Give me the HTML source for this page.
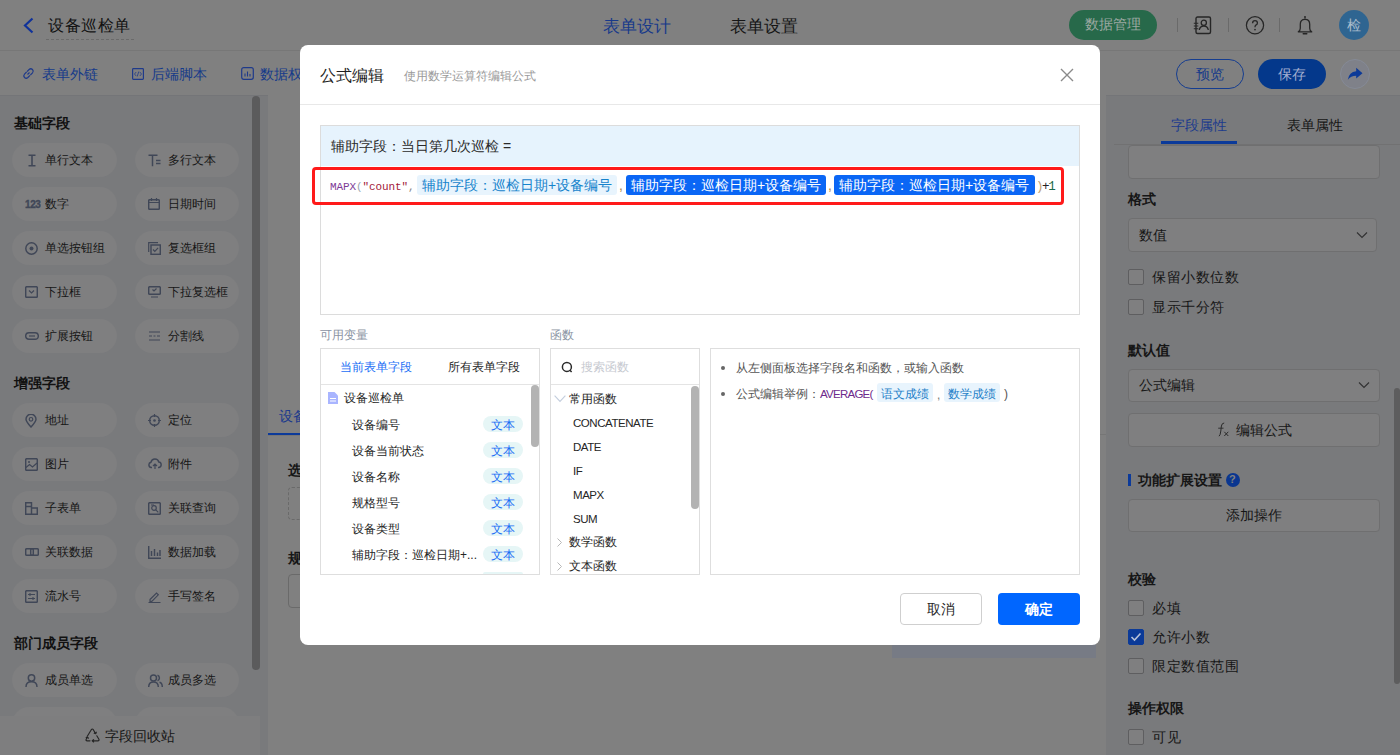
<!DOCTYPE html>
<html><head><meta charset="utf-8">
<style>
*{box-sizing:border-box;margin:0;padding:0}
html,body{width:1400px;height:755px;overflow:hidden}
body{position:relative;font-family:"Liberation Sans",sans-serif;background:#808080;color:#1a1a1a}
.a{position:absolute}
.t{position:absolute;white-space:nowrap;line-height:1}
/* background app (already dimmed colours) */
#hdrline{left:0;top:50px;width:1400px;height:1px;background:#777}
#left{left:0;top:95px;width:268px;height:660px;background:#797a7c;border-top:1px solid #747578}
#strip{display:none}
#right{left:1106px;top:95px;width:294px;height:660px;background:#797a7c;border-top:1px solid #747578}
.pill{position:absolute;width:105px;height:34px;border-radius:17px;background:#7f7f80}
.pill span{position:absolute;left:33px;top:11px;font-size:12px;line-height:13px;color:#161616;white-space:nowrap}
.pill svg{position:absolute;left:13px;top:11px}
.sec{position:absolute;left:14px;font-size:14px;font-weight:bold;line-height:14px;color:#111}
.rin{position:absolute;left:1128px;width:252px;height:33px;border:1px solid #6f6f70;border-radius:4px;background:#7f7f80}
.rlab{position:absolute;left:1128px;font-size:14px;font-weight:bold;line-height:14px;color:#161616}
.cb{position:absolute;left:1128px;width:16px;height:16px;border:1px solid #5e5e60;border-radius:2px;background:#7f7f80}
.cbt{position:absolute;left:1152px;font-size:14px;line-height:14px;letter-spacing:0.6px;color:#161616;white-space:nowrap}
/* modal */
#modal{left:300px;top:45px;width:800px;height:600px;background:#fff;border-radius:8px}
.mt{position:absolute;white-space:nowrap;line-height:1}
</style></head><body>

<!-- ===== header ===== -->
<svg class="a" style="left:22px;top:17px" width="14" height="17" viewBox="0 0 14 17"><path d="M10.5 1.5 L3 8.5 L10.5 15.5" fill="none" stroke="#10329a" stroke-width="2.2"/></svg>
<div class="t" style="left:48px;top:18px;font-size:16px;letter-spacing:0.5px;color:#121212">设备巡检单</div>
<div class="a" style="left:46px;top:39px;width:88px;border-top:1px dashed #6a6a6a"></div>
<div class="t" style="left:603px;top:18px;font-size:16.5px;color:#183a8a">表单设计</div>
<div class="t" style="left:730px;top:18px;font-size:16.5px;color:#161616">表单设置</div>
<div class="a" style="left:1069px;top:10px;width:88px;height:30px;border-radius:15px;background:#27694a"></div>
<div class="t" style="left:1085px;top:17px;font-size:14px;color:#9ca8a2">数据管理</div>
<div class="a" style="left:1177px;top:18px;width:1px;height:14px;background:#6a6a6a"></div>
<div class="a" style="left:1228px;top:18px;width:1px;height:14px;background:#6a6a6a"></div>
<div class="a" style="left:1279px;top:18px;width:1px;height:14px;background:#6a6a6a"></div>
<svg class="a" style="left:1192px;top:16px" width="20" height="19" viewBox="0 0 20 19"><rect x="4" y="1" width="14.5" height="16.5" rx="1.5" fill="none" stroke="#262626" stroke-width="1.4"/><circle cx="11.8" cy="6.7" r="2.6" fill="none" stroke="#262626" stroke-width="1.3"/><path d="M7.3 14 Q8 10 11.8 10 Q15.6 10 16.3 14" fill="none" stroke="#262626" stroke-width="1.3"/><path d="M1.8 7.3h4.5M1.8 10h4.5M1.8 12.7h4.5" stroke="#262626" stroke-width="1.1"/></svg>
<svg class="a" style="left:1245px;top:15px" width="20" height="20" viewBox="0 0 20 20"><circle cx="10" cy="10.3" r="8.6" fill="none" stroke="#262626" stroke-width="1.25"/><path d="M7.6 8.2 Q7.6 5.6 10 5.6 Q12.4 5.6 12.4 7.9 Q12.4 9.4 10.8 10.2 Q10 10.6 10 12.3" fill="none" stroke="#262626" stroke-width="1.3"/><circle cx="10" cy="14.6" r="0.85" fill="#262626"/></svg>
<svg class="a" style="left:1296px;top:16px" width="18" height="19" viewBox="0 0 18 19"><path d="M2.3 15.8 Q4.3 14.6 4.3 12.2 V8.2 Q4.3 3.3 9 3.3 Q13.7 3.3 13.7 8.2 V12.2 Q13.7 14.6 15.7 15.8 Z" fill="none" stroke="#262626" stroke-width="1.3" stroke-linejoin="round"/><path d="M9 0.6 V2" stroke="#262626" stroke-width="1.5" stroke-linecap="round"/><path d="M7.2 17.8 H10.8" stroke="#262626" stroke-width="1.4" stroke-linecap="round"/></svg>
<div class="a" style="left:1339px;top:10px;width:30px;height:30px;border-radius:15px;background:#2f6591"></div>
<div class="t" style="left:1347px;top:18px;font-size:14px;color:#a9bccc">检</div>
<div class="a" id="hdrline"></div>

<!-- toolbar -->
<svg class="a" style="left:22px;top:67px" width="13" height="13" viewBox="0 0 13 13"><path d="M5.5 7.5 L7.5 5.5 M4.6 5 L2.5 7.1 Q1 8.8 2.5 10.5 Q4.2 12 5.9 10.5 L8 8.4 M5 4.6 L7.1 2.5 Q8.8 1 10.5 2.5 Q12 4.2 10.5 5.9 L8.4 8" fill="none" stroke="#1f3a8a" stroke-width="1.2"/></svg>
<div class="t" style="left:42px;top:67px;font-size:14px;color:#153a8a">表单外链</div>
<svg class="a" style="left:132px;top:68px" width="12" height="12" viewBox="0 0 12 12"><rect x="0.6" y="0.6" width="10.8" height="10.8" rx="0.8" fill="none" stroke="#1f3a8a" stroke-width="1.2"/><path d="M4.2 4 L2.5 6 L4.2 8 M7.8 4 L9.5 6 L7.8 8 M6.8 3.5 L5.2 8.5" fill="none" stroke="#1f3a8a" stroke-width="0.8"/></svg>
<div class="t" style="left:151px;top:67px;font-size:14px;color:#153a8a">后端脚本</div>
<svg class="a" style="left:241px;top:67px" width="13" height="13" viewBox="0 0 13 13"><rect x="0.7" y="0.7" width="11.6" height="11.6" rx="2" fill="none" stroke="#1f3a8a" stroke-width="1.2"/><path d="M4 9.5V6.5M6.5 9.5V4.5M9 9.5V7" stroke="#1f3a8a" stroke-width="1.1"/></svg>
<div class="t" style="left:260px;top:67px;font-size:14px;color:#153a8a">数据权限</div>

<div class="a" style="left:1176px;top:59px;width:68px;height:30px;border-radius:15px;border:1px solid #153d90"></div>
<div class="t" style="left:1196px;top:67px;font-size:14px;color:#163a8a">预览</div>
<div class="a" style="left:1258px;top:59px;width:68px;height:30px;border-radius:15px;background:#04388b"></div>
<div class="t" style="left:1278px;top:67px;font-size:14px;color:#a3aed0">保存</div>
<div class="a" style="left:1340px;top:59px;width:30px;height:30px;border-radius:15px;border:1px solid #858a96;background:#7f8189"></div>
<svg class="a" style="left:1346px;top:66px" width="18" height="15" viewBox="0 0 18 15"><path d="M16.5 7.2 L10.2 1.8 V5.2 Q3 5.8 1.8 13.8 Q4.8 9.8 10.2 9.8 V12.6 Z" fill="#0c3a98"/></svg>

<!-- left panel -->
<div class="a" id="left"></div>
<div class="a" id="strip"></div>
<div class="a" style="left:252px;top:96px;width:8px;height:574px;border-radius:4px;background:#5b5b5c"></div>

<div class="sec" style="top:116px">基础字段</div>
<div class="pill" style="left:12px;top:143px"><svg style="left:15px" width="10" height="13" viewBox="0 0 10 13"><path d="M1.5 1.2h7M1.5 11.8h7M5 1.2v10.6" stroke="#404757" stroke-width="1.6"/></svg><span>单行文本</span></div>
<div class="pill" style="left:135px;width:104px;top:143px"><svg width="14" height="13" viewBox="0 0 14 13"><path d="M0.5 1.2h9M4.5 1.2v11M8 6.5h4.5M8 9.5h4.5" stroke="#404757" stroke-width="1.5"/></svg><span>多行文本</span></div>
<div class="pill" style="left:12px;top:187px"><svg width="16" height="12" viewBox="0 0 16 12"><text x="0" y="9.5" font-size="10" font-weight="bold" fill="#404757" stroke="#404757" stroke-width="0.35" font-family="Liberation Sans" letter-spacing="-0.4">123</text></svg><span>数字</span></div>
<div class="pill" style="left:135px;width:104px;top:187px"><svg width="12" height="12" viewBox="0 0 12 12"><rect x="0.7" y="1.7" width="10.6" height="9.6" rx="1" fill="none" stroke="#404757" stroke-width="1.45"/><path d="M0.7 4.5h10.6M3.5 0v3M8.5 0v3" stroke="#404757" stroke-width="1.2"/></svg><span>日期时间</span></div>
<div class="pill" style="left:12px;top:231px"><svg width="13" height="13" viewBox="0 0 13 13"><circle cx="6.5" cy="6.5" r="5.7" fill="none" stroke="#404757" stroke-width="1.45"/><circle cx="6.5" cy="6.5" r="2" fill="#404757"/></svg><span>单选按钮组</span></div>
<div class="pill" style="left:135px;width:104px;top:231px"><svg width="13" height="13" viewBox="0 0 13 13"><rect x="3" y="3" width="9.3" height="9.3" fill="none" stroke="#404757" stroke-width="1.45"/><path d="M0.7 10V0.7H10" fill="none" stroke="#404757" stroke-width="1.2"/><path d="M5 7.5l1.8 1.8 3.3-3.5" fill="none" stroke="#404757" stroke-width="1.2"/></svg><span>复选框组</span></div>
<div class="pill" style="left:12px;top:275px"><svg width="13" height="12" viewBox="0 0 13 12"><rect x="0.7" y="0.7" width="11.6" height="10.6" rx="1" fill="none" stroke="#404757" stroke-width="1.45"/><path d="M4 4.5l2.5 2.5 2.5-2.5" fill="none" stroke="#404757" stroke-width="1.2"/></svg><span>下拉框</span></div>
<div class="pill" style="left:135px;width:104px;top:275px"><svg width="13" height="12" viewBox="0 0 13 12"><rect x="0.7" y="0.7" width="11.6" height="7.6" rx="1" fill="none" stroke="#404757" stroke-width="1.45"/><path d="M3 11h7M4.5 3.5l1.5 1.5 2.5-2.5" fill="none" stroke="#404757" stroke-width="1.2"/></svg><span>下拉复选框</span></div>
<div class="pill" style="left:12px;top:319px"><svg width="14" height="12" viewBox="0 0 14 12"><rect x="0.7" y="2.7" width="12.6" height="6.6" rx="3.3" fill="none" stroke="#404757" stroke-width="1.45"/><path d="M4 6h6" stroke="#404757" stroke-width="1.2"/></svg><span>扩展按钮</span></div>
<div class="pill" style="left:135px;width:104px;top:319px"><svg width="13" height="12" viewBox="0 0 13 12"><path d="M1 2h11M1 10h11M1 6h3M5.5 6h2M9 6h3" stroke="#404757" stroke-width="1.2"/></svg><span>分割线</span></div>

<div class="sec" style="top:376px">增强字段</div>
<div class="pill" style="left:12px;top:403px"><svg width="12" height="14" viewBox="0 0 12 14"><path d="M6 13 Q1 7.5 1 5.2 A5 5 0 0 1 11 5.2 Q11 7.5 6 13Z" fill="none" stroke="#404757" stroke-width="1.45"/><circle cx="6" cy="5.3" r="1.8" fill="none" stroke="#404757" stroke-width="1.2"/></svg><span>地址</span></div>
<div class="pill" style="left:135px;width:104px;top:403px"><svg width="13" height="13" viewBox="0 0 13 13"><circle cx="6.5" cy="6.5" r="4.8" fill="none" stroke="#404757" stroke-width="1.45"/><circle cx="6.5" cy="6.5" r="1.3" fill="#404757"/><path d="M6.5 0v3M6.5 10v3M0 6.5h3M10 6.5h3" stroke="#404757" stroke-width="1.2"/></svg><span>定位</span></div>
<div class="pill" style="left:12px;top:447px"><svg width="13" height="13" viewBox="0 0 13 13"><rect x="0.7" y="0.7" width="11.6" height="11.6" rx="1" fill="none" stroke="#404757" stroke-width="1.45"/><path d="M1 9.5l3.5-3 3 2.5 4.5-4" fill="none" stroke="#404757" stroke-width="1.2"/><circle cx="4" cy="4" r="1" fill="#404757"/></svg><span>图片</span></div>
<div class="pill" style="left:135px;width:104px;top:447px"><svg width="14" height="12" viewBox="0 0 14 12"><path d="M4 9.5H3.2A2.7 2.7 0 0 1 3 4.2 4 4 0 0 1 10.8 4 2.8 2.8 0 0 1 11 9.5H10" fill="none" stroke="#404757" stroke-width="1.45"/><path d="M7 11V6M5 8l2-2 2 2" fill="none" stroke="#404757" stroke-width="1.2"/></svg><span>附件</span></div>
<div class="pill" style="left:12px;top:491px"><svg width="13" height="13" viewBox="0 0 13 13"><path d="M0.7 12.3V0.7H6.5V12.3ZM6.5 6H12.3V12.3H6.5M0.7 4.5H6.5" fill="none" stroke="#404757" stroke-width="1.45"/></svg><span>子表单</span></div>
<div class="pill" style="left:135px;width:104px;top:491px"><svg width="13" height="13" viewBox="0 0 13 13"><rect x="0.7" y="0.7" width="11.6" height="11.6" rx="1" fill="none" stroke="#404757" stroke-width="1.45"/><circle cx="6" cy="6" r="2.3" fill="none" stroke="#404757" stroke-width="1.2"/><path d="M7.8 7.8l2.5 2.5M3 3h3" stroke="#404757" stroke-width="1.2"/></svg><span>关联查询</span></div>
<div class="pill" style="left:12px;top:535px"><svg width="14" height="12" viewBox="0 0 14 12"><rect x="0.7" y="2.7" width="7.6" height="6.6" rx="1" fill="none" stroke="#404757" stroke-width="1.45"/><rect x="5.7" y="2.7" width="7.6" height="6.6" rx="1" fill="none" stroke="#404757" stroke-width="1.45"/></svg><span>关联数据</span></div>
<div class="pill" style="left:135px;width:104px;top:535px"><svg width="13" height="13" viewBox="0 0 13 13"><path d="M0.7 0v12.3H13M3.5 10V5M6.5 10V3M9.5 10V6.5M12 10V4" fill="none" stroke="#404757" stroke-width="1.45"/></svg><span>数据加载</span></div>
<div class="pill" style="left:12px;top:579px"><svg width="13" height="13" viewBox="0 0 13 13"><rect x="0.7" y="0.7" width="11.6" height="11.6" rx="1" fill="none" stroke="#404757" stroke-width="1.45"/><path d="M3 4.5h7M3 8.5h7M5 3v3M8 7v3" stroke="#404757" stroke-width="1.1"/></svg><span>流水号</span></div>
<div class="pill" style="left:135px;width:104px;top:579px"><svg width="13" height="13" viewBox="0 0 13 13"><path d="M2 9.5l6.5-6.5 1.8 1.8-6.5 6.5H2Z M0.5 12.5h12" fill="none" stroke="#404757" stroke-width="1.2"/></svg><span>手写签名</span></div>

<div class="sec" style="top:636px">部门成员字段</div>
<div class="pill" style="left:12px;top:663px"><svg width="13" height="13" viewBox="0 0 13 13"><circle cx="6.5" cy="4" r="3.2" fill="none" stroke="#404757" stroke-width="1.45"/><path d="M1 13Q1 7.8 6.5 7.8 12 7.8 12 13" fill="none" stroke="#404757" stroke-width="1.45"/></svg><span>成员单选</span></div>
<div class="pill" style="left:135px;width:104px;top:663px"><svg width="15" height="13" viewBox="0 0 15 13"><circle cx="5.5" cy="4" r="3" fill="none" stroke="#404757" stroke-width="1.45"/><path d="M0.7 13Q0.7 8 5.5 8 10.3 8 10.3 13M9.5 1.2A3 3 0 0 1 9.5 6.8M11.5 8.3Q14.3 9 14.3 13" fill="none" stroke="#404757" stroke-width="1.45"/></svg><span>成员多选</span></div>
<div class="pill" style="left:12px;top:707px"></div>
<div class="pill" style="left:135px;width:104px;top:707px"></div>
<div class="a" style="left:0;top:716px;width:260px;height:39px;background:#7e7e7f"></div>
<svg class="a" style="left:85px;top:728px" width="15" height="15" viewBox="0 0 15 15"><path d="M2.3 8.2 L6.3 1.7 Q7.3 0.3 8.3 1.7 L10.6 5.6 M9.2 5.3 L10.7 5.7 L11.3 4.2" fill="none" stroke="#262626" stroke-width="1.15" stroke-linejoin="round" stroke-linecap="round"/><path d="M11.8 7.8 L13.9 11.3 Q14.5 12.8 12.8 12.8 H7.3 M8.6 11.6 L7.2 12.8 L8.6 14" fill="none" stroke="#262626" stroke-width="1.15" stroke-linejoin="round" stroke-linecap="round"/><path d="M5 12.8 H2.2 Q0.5 12.8 1.2 11.3 L2.4 9.2 M1.2 9.6 L2.5 9 L3.4 10.2" fill="none" stroke="#262626" stroke-width="1.15" stroke-linejoin="round" stroke-linecap="round"/></svg>
<div class="t" style="left:105px;top:729px;font-size:14px;color:#161616">字段回收站</div>

<!-- canvas bits -->
<div class="t" style="left:279px;top:409px;font-size:14px;color:#1c3a8c">设备</div>
<div class="a" style="left:268px;top:433px;width:40px;height:3px;background:#0c3a9a"></div>
<div class="a" style="left:268px;top:435px;width:40px;height:1px;background:#767676"></div>
<div class="t" style="left:288px;top:463px;font-size:14px;font-weight:bold;color:#161616">选择</div>
<div class="a" style="left:288px;top:487px;width:40px;height:33px;border:1px dashed #6a6a6a;border-radius:4px"></div>
<div class="t" style="left:288px;top:551px;font-size:14px;font-weight:bold;color:#161616">规格</div>
<div class="a" style="left:288px;top:574px;width:40px;height:34px;border:1px solid #6a6a6a;border-radius:4px"></div>
<div class="a" style="left:1095px;top:434px;width:11px;height:1px;background:#767676"></div>
<div class="a" style="left:892px;top:640px;width:204px;height:18px;background:#777b85"></div>

<!-- right panel -->
<div class="a" id="right"></div>
<div class="a" style="left:1394px;top:388px;width:6px;height:296px;border-radius:3px;background:#5d5d5e"></div>
<div class="t" style="left:1171px;top:118px;font-size:14px;color:#1c3a8c">字段属性</div>
<div class="t" style="left:1287px;top:118px;font-size:14px;color:#161616">表单属性</div>
<div class="a" style="left:1114px;top:144px;width:286px;height:1px;background:#717172"></div>
<div class="a" style="left:1161px;top:141px;width:76px;height:3px;background:#0b3a9a"></div>
<div class="rin" style="top:145px;height:34px"></div>
<div class="rlab" style="top:192px">格式</div>
<div class="rin" style="top:218px;height:34px;width:249px"></div>
<div class="t" style="left:1139px;top:228px;font-size:14px;color:#161616">数值</div>
<svg class="a" style="left:1356px;top:231px" width="12" height="8" viewBox="0 0 12 8"><path d="M1 1.5l5 5 5-5" fill="none" stroke="#333" stroke-width="1.2"/></svg>
<div class="cb" style="top:269px"></div><div class="cbt" style="top:270px">保留小数位数</div>
<div class="cb" style="top:299px"></div><div class="cbt" style="top:300px">显示千分符</div>
<div class="rlab" style="top:343px">默认值</div>
<div class="rin" style="top:369px"></div>
<div class="t" style="left:1139px;top:378px;font-size:14px;color:#161616">公式编辑</div>
<svg class="a" style="left:1358px;top:381px" width="12" height="8" viewBox="0 0 12 8"><path d="M1 1.5l5 5 5-5" fill="none" stroke="#333" stroke-width="1.2"/></svg>
<div class="rin" style="top:413px;height:34px"></div>
<svg class="a" style="left:1217px;top:422px" width="13" height="16" viewBox="0 0 13 16"><path d="M2 14.2 Q3.3 13.5 3.8 9 L4.4 4 Q4.9 1 7.2 1" fill="none" stroke="#2a2a2a" stroke-width="1"/><path d="M1.2 6.2H6.5" stroke="#2a2a2a" stroke-width="0.9"/><path d="M7.3 9.8L11.3 14M11.3 9.8L7.3 14" stroke="#2a2a2a" stroke-width="1"/></svg>
<div class="t" style="left:1236px;top:423px;font-size:14px;color:#161616">编辑公式</div>
<div class="a" style="left:1128px;top:474px;width:3px;height:12px;background:#0b3a9a"></div>
<div class="t" style="left:1138px;top:473px;font-size:14px;font-weight:bold;color:#161616">功能扩展设置</div>
<div class="a" style="left:1226px;top:473px;width:14px;height:14px;border-radius:7px;background:#0a3690"></div>
<div class="t" style="left:1229px;top:474px;font-size:11px;font-weight:bold;color:#808080">?</div>
<div class="rin" style="top:499px"></div>
<div class="t" style="left:1226px;top:508px;font-size:14px;color:#161616">添加操作</div>
<div class="rlab" style="top:572px">校验</div>
<div class="cb" style="top:600px"></div><div class="cbt" style="top:601px">必填</div>
<div class="cb" style="top:629px;background:#0b3a98;border-color:#0b3a98"></div>
<svg class="a" style="left:1130px;top:632px" width="12" height="10" viewBox="0 0 12 10"><path d="M1.5 5l3 3 6-6.5" fill="none" stroke="#b8c2d8" stroke-width="1.6"/></svg>
<div class="cbt" style="top:630px">允许小数</div>
<div class="cb" style="top:658px"></div><div class="cbt" style="top:659px">限定数值范围</div>
<div class="rlab" style="top:701px">操作权限</div>
<div class="cb" style="top:729px"></div><div class="cbt" style="top:730px">可见</div>

<!-- ===== modal ===== -->
<div class="a" id="modal"></div>
<div class="t" style="left:320px;top:68px;font-size:16px;color:#1f1f1f">公式编辑</div>
<div class="t" style="left:404px;top:70px;font-size:12px;color:#9a9a9a">使用数学运算符编辑公式</div>
<svg class="a" style="left:1060px;top:68px" width="14" height="14" viewBox="0 0 14 14"><path d="M1 1L13 13M13 1L1 13" stroke="#8a8a8a" stroke-width="1.4"/></svg>
<div class="a" style="left:300px;top:104px;width:800px;height:1px;background:#e8e8e8"></div>
<div class="a" style="left:320px;top:125px;width:760px;height:190px;border:1px solid #dcdcdc"></div>
<div class="a" style="left:321px;top:126px;width:758px;height:40px;background:#e6f3fd"></div>
<div class="t" style="left:331px;top:139px;font-size:14px;color:#2a2a2a">辅助字段：当日第几次巡检 =</div>
<div class="a" style="left:312px;top:167px;width:752px;height:38px;border:3px solid #ff1a1a;border-radius:4px"></div>
<div class="t" style="left:330px;top:182px;font-size:11px;font-family:'Liberation Mono',monospace;letter-spacing:-0.1px;color:#7e3a96">MAPX<span style="color:#9aa7b0">(</span><span style="color:#a31a3a">"count"</span><span style="color:#888">,</span></div>
<div class="a" style="left:417px;top:175px;width:200px;height:20px;border-radius:3px;background:#e8f4fd"></div>
<div class="t" style="left:422px;top:178px;font-size:14px;color:#1683cc">辅助字段：巡检日期+设备编号</div>
<div class="t" style="left:619px;top:178px;font-size:14px;color:#a8844c">,</div>
<div class="a" style="left:626px;top:175px;width:200px;height:20px;border-radius:3px;background:#0a66f5"></div>
<div class="t" style="left:631px;top:178px;font-size:14px;color:#fff">辅助字段：巡检日期+设备编号</div>
<div class="t" style="left:828px;top:178px;font-size:14px;color:#a8844c">,</div>
<div class="a" style="left:834px;top:175px;width:201px;height:20px;border-radius:3px;background:#0a66f5"></div>
<div class="t" style="left:839px;top:178px;font-size:14px;color:#fff">辅助字段：巡检日期+设备编号</div>
<div class="t" style="left:1036px;top:181px;font-size:12.5px;font-family:'Liberation Mono',monospace;letter-spacing:-1.4px;color:#c0a070">)<span style="color:#222">+</span><span style="color:#1a6a4a">1</span></div>

<div class="t" style="left:320px;top:329px;font-size:12px;color:#8a93a3">可用变量</div>
<div class="t" style="left:550px;top:329px;font-size:12px;color:#8a93a3">函数</div>

<div class="a" style="left:320px;top:348px;width:220px;height:227px;border:1px solid #dedede"></div>
<div class="a" style="left:321px;top:384px;width:218px;height:1px;background:#e4e4e4"></div>
<div class="t" style="left:340px;top:361px;font-size:12px;color:#1a6ef5">当前表单字段</div>
<div class="t" style="left:448px;top:361px;font-size:12px;color:#262626">所有表单字段</div>
<svg class="a" style="left:328px;top:392px" width="10" height="12" viewBox="0 0 10 12"><path d="M0 0H6.5L10 3.5V12H0Z" fill="#a9b5ff"/><path d="M2 6.5H8M2 9H8" stroke="#fff" stroke-width="1"/></svg>
<div class="t" style="left:344px;top:392px;font-size:12px;color:#262626">设备巡检单</div>
<div class="a" style="left:531px;top:385px;width:8px;height:62px;border-radius:4px;background:#b3b3b3"></div>
<div class="t" style="left:352px;top:419px;font-size:12px;color:#262626">设备编号</div>
<div class="a" style="left:483px;top:416px;width:40px;height:16px;border-radius:8px;background:#e6f6f6"></div>
<div class="t" style="left:491px;top:419px;font-size:12px;color:#1a6ef5">文本</div>
<div class="t" style="left:352px;top:445px;font-size:12px;color:#262626">设备当前状态</div>
<div class="a" style="left:483px;top:442px;width:40px;height:16px;border-radius:8px;background:#e6f6f6"></div>
<div class="t" style="left:491px;top:445px;font-size:12px;color:#1a6ef5">文本</div>
<div class="t" style="left:352px;top:471px;font-size:12px;color:#262626">设备名称</div>
<div class="a" style="left:483px;top:468px;width:40px;height:16px;border-radius:8px;background:#e6f6f6"></div>
<div class="t" style="left:491px;top:471px;font-size:12px;color:#1a6ef5">文本</div>
<div class="t" style="left:352px;top:497px;font-size:12px;color:#262626">规格型号</div>
<div class="a" style="left:483px;top:494px;width:40px;height:16px;border-radius:8px;background:#e6f6f6"></div>
<div class="t" style="left:491px;top:497px;font-size:12px;color:#1a6ef5">文本</div>
<div class="t" style="left:352px;top:523px;font-size:12px;color:#262626">设备类型</div>
<div class="a" style="left:483px;top:520px;width:40px;height:16px;border-radius:8px;background:#e6f6f6"></div>
<div class="t" style="left:491px;top:523px;font-size:12px;color:#1a6ef5">文本</div>
<div class="t" style="left:352px;top:549px;font-size:12px;color:#262626">辅助字段：巡检日期+...</div>
<div class="a" style="left:483px;top:546px;width:40px;height:16px;border-radius:8px;background:#e6f6f6"></div>
<div class="t" style="left:491px;top:549px;font-size:12px;color:#1a6ef5">文本</div>
<div class="a" style="left:483px;top:572px;width:40px;height:2px;border-radius:8px 8px 0 0;background:#e6f6f6"></div>

<div class="a" style="left:550px;top:348px;width:150px;height:227px;border:1px solid #dedede"></div>
<div class="a" style="left:551px;top:384px;width:148px;height:1px;background:#e4e4e4"></div>
<svg class="a" style="left:561px;top:361px" width="12" height="13" viewBox="0 0 12 13"><circle cx="5.9" cy="5.9" r="4.5" fill="none" stroke="#2a2a2a" stroke-width="1.5"/><path d="M9 9.2L10.6 10.9" stroke="#2a2a2a" stroke-width="1.5"/></svg>
<div class="t" style="left:581px;top:361px;font-size:12px;color:#c6c9d0">搜索函数</div>
<svg class="a" style="left:554px;top:395px" width="12" height="8" viewBox="0 0 12 8"><path d="M0.6 0.6L6 6.4 11.4 0.6" fill="none" stroke="#c3cddd" stroke-width="1.1"/></svg>
<div class="t" style="left:569px;top:393px;font-size:12px;color:#262626">常用函数</div>
<div class="t" style="left:573px;top:418px;font-size:11.5px;letter-spacing:-0.45px;color:#262626">CONCATENATE</div>
<div class="t" style="left:573px;top:442px;font-size:11.5px;letter-spacing:-0.45px;color:#262626">DATE</div>
<div class="t" style="left:573px;top:466px;font-size:11.5px;letter-spacing:-0.45px;color:#262626">IF</div>
<div class="t" style="left:573px;top:490px;font-size:11.5px;letter-spacing:-0.45px;color:#262626">MAPX</div>
<div class="t" style="left:573px;top:514px;font-size:11.5px;letter-spacing:-0.45px;color:#262626">SUM</div>
<svg class="a" style="left:557px;top:538px" width="5" height="9" viewBox="0 0 5 9"><path d="M0.5 0.5L4.5 4.5 0.5 8.5" fill="none" stroke="#b8b8b8" stroke-width="1"/></svg>
<div class="t" style="left:569px;top:536px;font-size:12px;color:#262626">数学函数</div>
<svg class="a" style="left:557px;top:562px" width="5" height="9" viewBox="0 0 5 9"><path d="M0.5 0.5L4.5 4.5 0.5 8.5" fill="none" stroke="#b8b8b8" stroke-width="1"/></svg>
<div class="t" style="left:569px;top:560px;font-size:12px;color:#262626">文本函数</div>
<div class="a" style="left:691px;top:386px;width:8px;height:123px;border-radius:4px;background:#b3b3b3"></div>

<div class="a" style="left:710px;top:348px;width:370px;height:227px;border:1px solid #dedede"></div>
<div class="a" style="left:721px;top:366px;width:4px;height:4px;border-radius:2px;background:#666"></div>
<div class="t" style="left:736px;top:362px;font-size:12px;color:#555">从左侧面板选择字段名和函数，或输入函数</div>
<div class="a" style="left:721px;top:392px;width:4px;height:4px;border-radius:2px;background:#666"></div>
<div class="t" style="left:736px;top:388px;font-size:12px;color:#555">公式编辑举例：<span style="color:#6e2a8c;font-size:11.5px;letter-spacing:-0.75px">AVERAGE(</span></div>
<div class="a" style="left:877px;top:383px;width:56px;height:19px;border-radius:3px;background:#e8f4fd"></div>
<div class="t" style="left:881px;top:388px;font-size:12px;color:#1e7fc8">语文成绩</div>
<div class="t" style="left:937px;top:389px;font-size:12px;color:#777">,</div>
<div class="a" style="left:944px;top:383px;width:56px;height:19px;border-radius:3px;background:#e8f4fd"></div>
<div class="t" style="left:948px;top:388px;font-size:12px;color:#1e7fc8">数学成绩</div>
<div class="t" style="left:1004px;top:388px;font-size:12px;color:#555">)</div>

<div class="a" style="left:900px;top:593px;width:82px;height:32px;border:1px solid #cfcfcf;border-radius:4px;background:#fff"></div>
<div class="t" style="left:927px;top:602px;font-size:14px;color:#262626">取消</div>
<div class="a" style="left:998px;top:593px;width:82px;height:32px;border-radius:4px;background:#0066ff"></div>
<div class="t" style="left:1025px;top:602px;font-size:14px;font-weight:bold;color:#fff">确定</div>


</body></html>
